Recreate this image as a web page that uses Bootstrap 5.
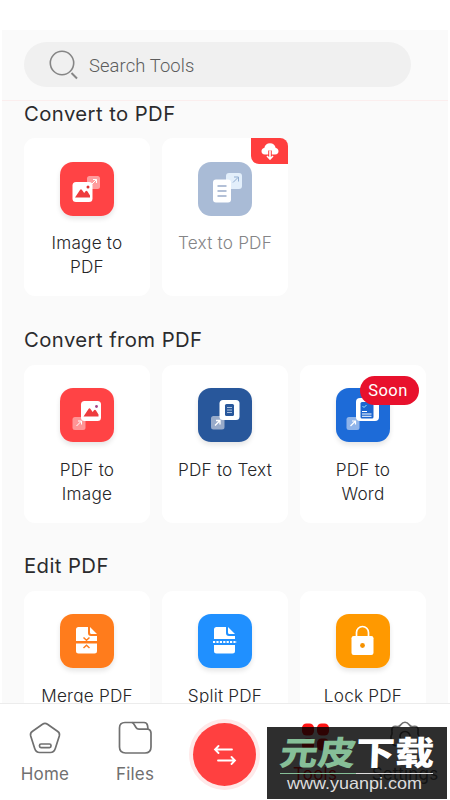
<!DOCTYPE html>
<html lang="en">
<head>
<meta charset="utf-8">
<meta name="viewport" content="width=device-width, initial-scale=1">
<title>PDF Tools</title>
<link rel="stylesheet" href="https://cdn.jsdelivr.net/npm/bootstrap@5.3.0/dist/css/bootstrap.min.css">
<style>
body{font-family:Inter,"Open Sans",sans-serif;background:#fff;color:#2f2f31}
.screen{height:800px;width:450px}
.app-top{height:71px;margin:30px 2px 0;background:#fafafa;border-bottom:1px solid #fbeeee;padding:12px 37px 0 22px}
.search-pill{height:45px;background:#f0f0f0;font:300 18.4px Roboto,sans-serif;letter-spacing:.1px;padding-left:24px;gap:10px}
.search-pill span{padding-top:2px;color:#5c5c5c}
.tools{height:602px;margin:0 2px;background:#fafafa;padding:0 22px}
.tool-section{height:226.2px}
.tool-section h2{font-size:20.3px;font-weight:400;line-height:26px;letter-spacing:.42px;margin:0 0 11.400px;color:#2b2b2d}
.tool-grid{display:grid;grid-template-columns:repeat(3,126px);gap:12px}
.tool{height:158px;background:#fff;border-radius:11px;padding-top:23.5px;font-size:17.2px;line-height:24px;font-weight:300;letter-spacing:.2px;color:#262628}
.tool svg.tile{width:54px;height:54px;border-radius:13px;box-shadow:0 3px 5px rgba(0,0,0,.1);margin-bottom:15.6px;flex:none}
.tool.dim{color:#858587}
.tool.dim svg.tile{box-shadow:none}
.tool .cloud{top:0;right:0;width:37px;height:26px;background:#ff3e3e;border-radius:0 8px 0 8px}
.tool .soon{top:11px;left:60px;width:59px;height:29px;background:#e8112d;color:#fff;font:400 16.5px/29px Roboto,sans-serif;letter-spacing:.4px;padding-right:3px}
.bottom-nav{height:97px;background:#fff;border-top:1px solid #ececec;font-size:17px;color:#707070}
.bottom-nav .nav-item{width:90px;padding-top:16px}
.bottom-nav .nav-item svg{width:36px;height:36px}
.bottom-nav .nav-item span{line-height:24px;margin-top:6px;letter-spacing:.2px}
.bottom-nav .current{color:#ff1a1a}
.swap{width:63px;height:63px;background:#ff4040;box-shadow:0 0 0 4px #ffe9e9;margin:19px 1px 0 0}
.bottom-nav .swap svg{width:26px;height:24px}
.stamp{left:267px;top:727px;width:180px;height:72px;background:rgba(0,0,0,.82)}
</style>
<script src="https://cdn.jsdelivr.net/npm/bootstrap@5.3.0/dist/js/bootstrap.bundle.min.js"></script>
</head>
<body>
<div class="screen position-relative overflow-hidden d-flex flex-column">
  <header class="app-top flex-shrink-0">
    <div class="search-pill rounded-pill d-flex align-items-center">
      <svg width="31" height="31" viewBox="0 0 31 31" fill="none" stroke="#858585" stroke-width="1.6"><circle cx="14" cy="14" r="11.7"/><path d="M23.500 24 29 29.500" stroke-width="2"/></svg>
      <span>Search Tools</span>
    </div>
  </header>

  <main class="tools overflow-hidden flex-shrink-0">
    <section class="tool-section">
      <h2>Convert to PDF</h2>
      <div class="tool-grid">
        <div class="tool d-flex flex-column align-items-center text-center">
          <svg class="tile" viewBox="0 0 54 54"><rect width="54" height="54" fill="#ff4345"/><rect x="27" y="14" width="13" height="13" rx="2.5" fill="#ff9c9d"/><path d="M31.5 22.5 36.5 17.5M33 17.5h3.5V21" stroke="#fff" fill="none"/><rect x="12.500" y="20" width="20" height="20" rx="3.500" fill="#fff"/><path d="M15 35.500 20 28q1-1.300 2 0l2.200 3 1.300-1.800q1-1.200 2 .2L30 33.500v2z" fill="#ee3c3e"/><circle cx="28" cy="25" r="1.500" fill="#d33"/></svg>
          <span>Image to<br>PDF</span>
        </div>
        <div class="tool dim position-relative d-flex flex-column align-items-center text-center">
          <svg class="tile" viewBox="0 0 54 54"><rect width="54" height="54" fill="#a9bbd6"/><rect x="28" y="11" width="16" height="16" rx="3" fill="#e3effb"/><path d="M35 20.500 40 15.500M36 15h4.500v4.500" stroke="#91add1" fill="none"/><rect x="15" y="17.500" width="18" height="23" rx="3" fill="#fff"/><path d="M19.500 24h9M19.500 29h9M19.500 34h9" stroke="#9bacca" stroke-width="1.300"/></svg>
          <span>Text to PDF</span>
          <span class="cloud position-absolute d-flex justify-content-center align-items-center">
            <svg width="20" height="18" viewBox="0 0 20 18"><path d="M5 12.500C2.500 12.500 1.500 11 1.500 9.300 1.500 7.500 2.800 6.200 4.300 6 4.800 3 7 1.200 10 1.200S15.200 3 15.700 6c1.500.2 2.800 1.500 2.800 3.300 0 1.700-1 3.200-3.500 3.200z" fill="#fff"/><path d="M10 8.500v6" stroke="#ff3e3e" stroke-width="3.600"/><path d="M10 8.500V17M7 14l3 3 3-3" fill="none" stroke="#fff" stroke-width="1.600"/></svg>
          </span>
        </div>
      </div>
    </section>

    <section class="tool-section">
      <h2>Convert from PDF</h2>
      <div class="tool-grid">
        <div class="tool d-flex flex-column align-items-center text-center">
          <svg class="tile" viewBox="0 0 54 54"><rect width="54" height="54" fill="#ff4345"/><rect x="12.500" y="29" width="13" height="13" rx="2.500" fill="#ff9495"/><path d="M16.500 38 21.500 33M18 33h3.500v3.500" stroke="#fff" fill="none"/><rect x="21" y="13" width="20" height="20" rx="3.500" fill="#fff"/><path d="M23.500 28.500 28.500 21q1-1.300 2 0l2.200 3 1.300-1.800q1-1.200 2 .2L38.500 26.500v2z" fill="#ee3c3e"/><circle cx="36.500" cy="18.500" r="1.400" fill="#a64388"/></svg>
          <span>PDF to<br>Image</span>
        </div>
        <div class="tool d-flex flex-column align-items-center text-center">
          <svg class="tile" viewBox="0 0 54 54"><rect width="54" height="54" fill="#28579b"/><rect x="13" y="28" width="13.500" height="13.500" rx="2.500" fill="#98abca"/><path d="M17 37.500 22 32.500M18 32.500h4v4" stroke="#fff" stroke-width="1.300" fill="none"/><rect x="21.500" y="12" width="20" height="20" rx="3.500" fill="#fff"/><rect x="27" y="16" width="9" height="12" rx="1.500" fill="#28579b"/><path d="M29 19.500h5M29 22h5M29 24.500h5" stroke="#b9cce6" stroke-width=".9"/></svg>
          <span>PDF to Text</span>
        </div>
        <div class="tool position-relative d-flex flex-column align-items-center text-center">
          <svg class="tile" viewBox="0 0 54 54"><rect width="54" height="54" fill="#1d6bd8"/><rect x="10.500" y="29" width="13" height="13" rx="2.500" fill="#8fb4ea"/><path d="M14.500 38 19.500 33M16 33h3.500v3.500" stroke="#fff" stroke-width="1.200" fill="none"/><rect x="20" y="10" width="23" height="23" rx="4" fill="#fff"/><rect x="24.500" y="14" width="13" height="16.500" rx="1.500" fill="#1c66cf"/><path d="M26.500 18l1.500 1.500 2.500-2.500" stroke="#9be4ff" fill="none"/><path d="M26 23.500h5M26 26h9.500M26 28.300h9.500" stroke="#fff"/></svg>
          <span>PDF to<br>Word</span>
          <span class="soon position-absolute rounded-pill">Soon</span>
        </div>
      </div>
    </section>

    <section class="tool-section">
      <h2>Edit PDF</h2>
      <div class="tool-grid">
        <div class="tool d-flex flex-column align-items-center text-center">
          <svg class="tile" viewBox="0 0 54 54"><rect width="54" height="54" fill="#ff7c1c"/><path d="M18.500 13H28v6q0 3 3 3h6v5H16V15.500q0-2.500 2.500-2.500zM30 13l7 7h-5.500q-1.500 0-1.500-1.500zM16 29.500h21V37q0 2.500-2.500 2.500h-16Q16 39.500 16 37z" fill="#fff"/><path d="M23.500 23.500l3 2.700 3-2.700M23.500 34l3-2.700 3 2.700" fill="none" stroke="#ff7c1c" stroke-width="1.500"/></svg>
          <span>Merge PDF</span>
        </div>
        <div class="tool d-flex flex-column align-items-center text-center">
          <svg class="tile" viewBox="0 0 54 54"><rect width="54" height="54" fill="#2090ff"/><path d="M18.500 13H28v6q0 3 3 3h6v3H16v-9.500q0-2.500 2.500-2.500zM30 13l7 7h-5.500q-1.500 0-1.500-1.500zM16 31h21v6q0 2.500-2.500 2.500h-16Q16 39.500 16 37z" fill="#fff"/><path d="M15 28h24" stroke="#fff" stroke-width="1.800" stroke-dasharray="2.200 1.200"/></svg>
          <span>Split PDF</span>
        </div>
        <div class="tool d-flex flex-column align-items-center text-center">
          <svg class="tile" viewBox="0 0 54 54"><rect width="54" height="54" fill="#ff9900"/><path d="M20.500 23v-4.500a6 6 0 0 1 12 0V23" fill="none" stroke="#fff" stroke-width="1.700"/><rect x="15.500" y="22" width="22" height="19" rx="2.200" fill="#fff"/><circle cx="26.500" cy="31.500" r="2.400" fill="#f59100"/></svg>
          <span>Lock PDF</span>
        </div>
      </div>
    </section>
  </main>

  <nav class="bottom-nav d-flex flex-shrink-0">
    <div class="nav-item d-flex flex-column align-items-center">
      <svg viewBox="0 0 36 36" fill="none" stroke="#707070" stroke-width="1.700"><path d="M15.500 4.300q2.500-1.800 5 0l10.300 7.200q2.300 1.600 1.500 4.500l-4 12.500q-1.300 4-5 4H12.700q-3.700 0-5-4l-4-12.500q-.8-2.900 1.500-4.500z"/><rect x="12.500" y="24" width="11.500" height="3.600" rx="1.500"/></svg>
      <span>Home</span>
    </div>
    <div class="nav-item d-flex flex-column align-items-center">
      <svg viewBox="0 0 36 36" fill="none" stroke="#707070" stroke-width="1.700"><path d="M8 2.500h19q3 0 3.500 3l.5 3.500q3 1 3 4V27q0 6-6 6H8.500q-6 0-6-6V8q0-5.500 5.500-5.500z"/><path d="M15 2.500q1.500.5 2.500 2.500l1.500 2.500q1 1.700 3 1.700h9"/></svg>
      <span>Files</span>
    </div>
    <div class="nav-item pt-0 d-flex flex-column align-items-center">
      <div class="swap rounded-circle d-flex align-items-center justify-content-center">
        <svg viewBox="0 0 26 24" fill="none" stroke="#fff" stroke-width="1.800" stroke-linecap="round"><path d="M20 6.500H3M6.500 3 3 6.500 6.500 10M6 17.500h17M19.500 14l3.500 3.500-3.500 3.500"/></svg>
      </div>
    </div>
    <div class="nav-item current d-flex flex-column align-items-center">
      <svg viewBox="0 0 36 36" fill="#ff1515"><rect x="5" y="3.500" width="12" height="12" rx="4.500"/><rect x="20" y="3.500" width="12" height="12" rx="4.500"/><rect x="5" y="18.500" width="12" height="12" rx="4.500"/><rect x="20" y="18.500" width="12" height="12" rx="4.500"/></svg>
      <span>Tools</span>
    </div>
    <div class="nav-item d-flex flex-column align-items-center">
      <svg viewBox="0 0 36 36" fill="none" stroke="#707070" stroke-width="1.700"><path d="M13.500 5q4.500-5.500 9 0 1 2 3.500 1.500 6-1 5 5-.5 2.500 1 5 .5 2-1 5-1 5-6 4-2.500 0-3.500 1.500-3.500 4-7 0-1-1.500-3.500-1.500-5 1-6-4-1.500-3-1-5 1.500-2.500 1-5-1-6 5-5 2.500.500 3.500-1.500z"/><circle cx="18" cy="16.500" r="5"/></svg>
      <span>Settings</span>
    </div>
  </nav>

  <div class="stamp position-absolute">
    <svg class="d-block" width="180" height="72" viewBox="0 0 180 72">
      <g font-family="'Noto Sans CJK SC',sans-serif" font-weight="900" font-size="33">
        <text x="17" y="38.500" transform="skewX(-8)" textLength="76" lengthAdjust="spacingAndGlyphs" fill="#86bf98">元皮</text>
        <text x="90" y="38.500" transform="skewX(-2)" textLength="78" lengthAdjust="spacingAndGlyphs" fill="#fff">下载</text>
      </g>
      <path d="M13 46.500h76" stroke="#86bf98"/><path d="M89 46.500h77" stroke="#ddd"/>
      <text x="20" y="62" font-family="'Liberation Sans',sans-serif" font-size="16.500" textLength="135" lengthAdjust="spacingAndGlyphs" fill="#ddd">www.yuanpi.com</text>
    </svg>
  </div>
</div>
</body>
</html>
